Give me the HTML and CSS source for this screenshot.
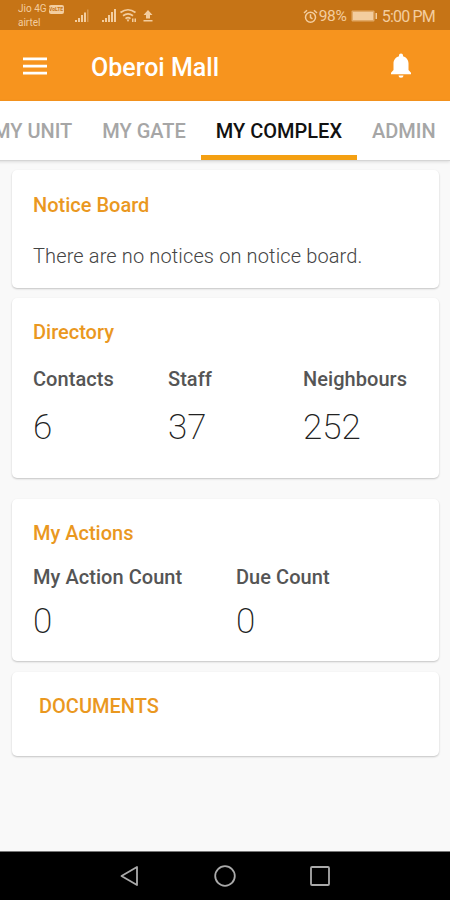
FILE: index.html
```html
<!DOCTYPE html>
<html lang="en">
<head>
  <meta charset="UTF-8" />
  <meta name="viewport" content="width=device-width, initial-scale=1.0"/>
  <title>Oberoi Mall</title>
  <link rel="stylesheet" href="styles.css">
</head>
<body>
  <div class="status-bar">
    <div class="carrier">
      <div class="carrier-row"><span>Jio 4G</span><span class="volte">VoLTE</span></div>
      <div>airtel</div>
    </div>
    <svg class="signals" width="82" height="16" viewBox="0 0 82 16" fill="currentColor">
      <path d="M1 12h2v2H1zM4 10h2v4H4zM7 7h2v7H7zM10 4.500h2v9.500h-2z"/>
      <path d="M13 1.500h1.500v12.500H13z" opacity=".4"/>
      <path d="M28 12h2v2h-2zM31 10h2v4h-2zM34 7h2v7h-2zM37 4h2v10h-2zM40 1h2v13h-2z"/>
      <g fill="none" stroke="currentColor" stroke-width="1.700">
        <path d="M46.500 4.500q7.500-5.500 15 0M49 7.700q5-3.800 10 0M51.500 10.700q2.500-2 5 0"/>
      </g>
      <path d="M52.500 11.500h3L54 14zM58 10.500h1.500V14H58zM60.500 10.500H62V14h-1.500z"/>
      <path d="M74 2l4.500 5H76v3.500h-4V7h-2.500zM69.500 12h9v1.600h-9z"/>
    </svg>
    <div class="status-right">
      <svg width="15" height="15" viewBox="0 0 15 15" fill="none" stroke="currentColor" stroke-width="1.500">
        <circle cx="7.500" cy="8.200" r="5"/>
        <path d="M1 4l3-2.800M14 4l-3-2.800M7.500 5.200v3.300l2 1.300"/>
      </svg>
      <span class="percent">98%</span>
      <svg class="battery" width="27" height="12" viewBox="0 0 27 12" fill="currentColor">
        <rect x="0.500" y="0.500" width="23" height="11" rx="1" opacity=".6"/>
        <rect x="2" y="2" width="20" height="8"/>
        <rect x="24.500" y="3" width="1.500" height="6"/>
      </svg>
      <span class="time">5:00 PM</span>
    </div>
  </div>

  <header>
    <svg class="menu" width="24" height="18" viewBox="0 0 24 18" fill="#fff">
      <path d="M0 0.500h24v2.700H0zM0 7.700h24v2.700H0zM0 14.800h24v2.700H0z"/>
    </svg>
    <h1>Oberoi Mall</h1>
    <svg class="bell" width="22" height="26" viewBox="0 0 22 26" fill="#fff">
      <path d="M11 0.500c-1.200 0-2 .8-2 2v.7C5.600 4 3.500 7 3.500 10.500V17L1 19.800V21.300h20v-1.500L18.500 17v-6.500C18.500 7 16.400 4 13 3.200v-.7c0-1.200-.8-2-2-2zM8.500 22.500a2.500 2.300 0 0 0 5 0z"/>
    </svg>
  </header>

  <nav class="tabs">
    <a class="tab">MY UNIT</a>
    <a class="tab">MY GATE</a>
    <a class="tab active">MY COMPLEX</a>
    <a class="tab">ADMIN</a>
  </nav>

  <main>
    <section class="card notice">
      <h2>Notice Board</h2>
      <p>There are no notices on notice board.</p>
    </section>

    <section class="card directory">
      <h2>Directory</h2>
      <div class="counts">
        <div class="count"><h3>Contacts</h3><div class="number">6</div></div>
        <div class="count"><h3>Staff</h3><div class="number">37</div></div>
        <div class="count"><h3>Neighbours</h3><div class="number">252</div></div>
      </div>
    </section>

    <section class="card actions">
      <h2>My Actions</h2>
      <div class="counts">
        <div class="count"><h3>My Action Count</h3><div class="number">0</div></div>
        <div class="count"><h3>Due Count</h3><div class="number">0</div></div>
      </div>
    </section>

    <section class="card documents">
      <h2>DOCUMENTS</h2>
    </section>
  </main>

  <footer>
    <svg width="22" height="22" viewBox="0 0 22 22"><path d="M2.500 11L18 2v18z"/></svg>
    <svg width="22" height="22" viewBox="0 0 22 22"><circle cx="11" cy="11" r="9.800"/></svg>
    <svg width="22" height="22" viewBox="0 0 22 22"><rect x="2" y="2" width="18" height="18" rx="1"/></svg>
  </footer>
</body>
</html>
```
FILE: styles.css
```css
* {
  box-sizing: border-box;
}

body {
  font-family: Roboto, "Liberation Sans", sans-serif;
  background: #f9f9f9;
  margin: 0;
  height: 900px;
  display: flex;
  flex-direction: column;
  overflow: hidden;
}

h1, h2, h3, p {
  margin: 0;
  white-space: nowrap;
}

.status-bar {
  height: 30px;
  background: #c67416;
  color: #f3cd9f;
  display: flex;
  align-items: center;
  padding: 2px 15px 0 18px;
}

.carrier {
  width: 56px;
  font-size: 10px;
  line-height: 14px;
}

.carrier-row {
  display: flex;
  align-items: center;
  gap: 2px;
  white-space: nowrap;
}

.volte {
  background: #f3cd9f;
  color: #c67416;
  font-size: 5px;
  font-weight: bold;
  line-height: 9px;
  width: 15px;
  text-align: center;
  border-radius: 2px;
}

.status-right {
  margin-left: auto;
  display: flex;
  align-items: center;
}

.percent {
  margin-left: 1px;
  width: 32px;
  font-size: 15.5px;
  letter-spacing: -0.3px;
}

.time {
  margin-left: 4px;
  font-size: 16px;
  letter-spacing: -0.8px;
}

header {
  height: 71px;
  background: #f7941e;
  color: white;
  display: flex;
  align-items: center;
  padding: 0 38px 0 23px;
}

h1 {
  font-size: 25px;
  font-weight: 500;
  margin-left: 44px;
  padding-top: 3px;
}

.bell {
  margin-left: auto;
}

.tabs {
  height: 60px;
  background: white;
  border-bottom: 1px solid #d5d5d5;
  box-shadow: 0 1px 3px rgba(0, 0, 0, 0.12);
  display: flex;
  flex: none;
  margin-left: -22px;
}

.tab {
  flex: none;
  padding: 0 15px;
  font-size: 20px;
  font-weight: 500;
  line-height: 61px;
  color: #a6a6a6;
}

.tab.active {
  color: #111;
  border-bottom: 5px solid #f4a012;
}

main {
  flex: 1;
  padding: 9px 11px 0 12px;
}

.card {
  background: white;
  border-radius: 5px;
  box-shadow: 0 1px 2px rgba(0, 0, 0, 0.22);
  padding: 23px 21px 0;
}

h2 {
  font-size: 20px;
  font-weight: 500;
  line-height: 24px;
  color: #ea981f;
}

h3 {
  font-size: 20px;
  font-weight: 500;
  line-height: 24px;
  letter-spacing: 0.05px;
  color: #555;
}

.notice {
  height: 118px;
  margin-bottom: 10px;
}

.notice p {
  margin-top: 27px;
  font-size: 20px;
  font-weight: 300;
  line-height: 24px;
  letter-spacing: 0.13px;
  color: #444;
}

.directory {
  height: 180px;
  margin-bottom: 21px;
  padding-top: 22px;
}

.counts {
  display: flex;
  margin-top: 23px;
}

.count {
  flex: none;
  width: 135px;
}

.number {
  margin-top: 16px;
  font-size: 35px;
  font-weight: 200;
  line-height: 42px;
  color: #222;
}

.actions {
  height: 162px;
  margin-bottom: 11px;
  padding-top: 22px;
}

.actions .counts {
  margin-top: 20px;
}

.actions .count {
  width: 203px;
}

.actions .number {
  margin-top: 12px;
}

.documents {
  height: 84px;
  padding-top: 22px;
  padding-left: 27px;
}

footer {
  height: 49px;
  background: black;
  border-top: 1px solid #777;
  display: flex;
  justify-content: center;
  align-items: center;
  gap: 73px;
}

footer svg {
  fill: none;
  stroke: #aaa;
  stroke-width: 1.8;
  stroke-linejoin: round;
}
```
